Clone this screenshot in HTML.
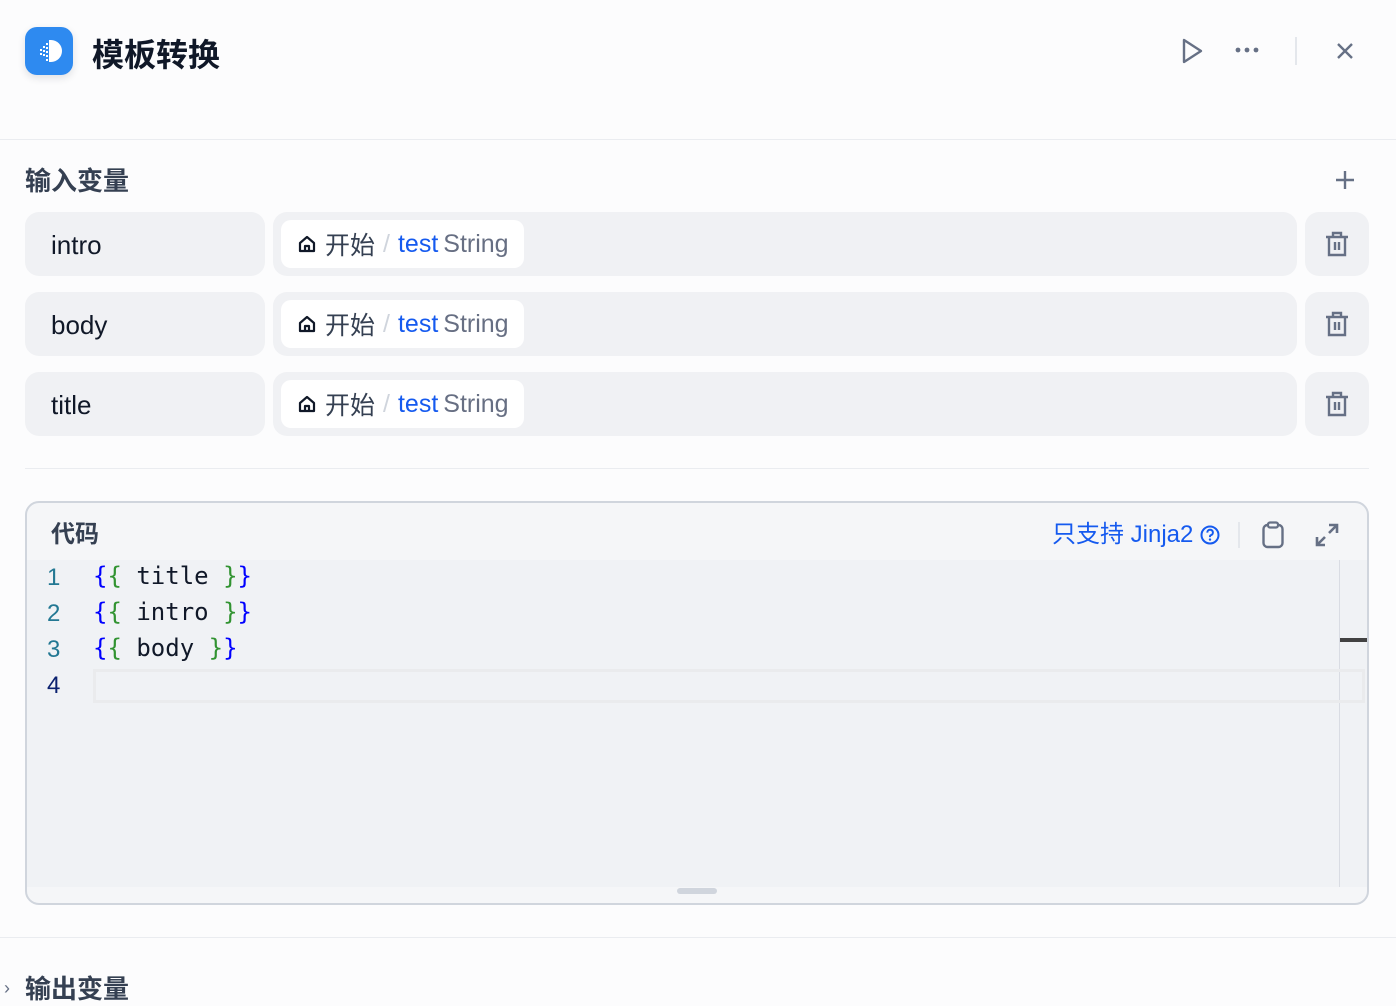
<!DOCTYPE html>
<html><head><meta charset="utf-8"><style>
*{box-sizing:border-box;margin:0;padding:0}
body{width:1396px;height:998px;overflow:hidden;background:#fcfcfd;font-family:"Liberation Sans","Noto Sans CJK SC",sans-serif;position:relative;color:#101828}
.a{position:absolute}
.name{position:absolute;left:25px;width:240px;height:64px;background:#f0f1f4;border-radius:14px;font-size:26px;color:#101828;padding-left:26px;line-height:66px}
.sel{position:absolute;left:273px;width:1024px;height:64px;background:#f0f1f4;border-radius:14px}
.pill{position:absolute;left:8px;top:8px;height:48px;width:243px;background:#fff;border-radius:10px;display:flex;align-items:center;padding-left:16px;font-size:25px;white-space:nowrap}
.del{position:absolute;left:1305px;width:64px;height:64px;background:#f0f1f4;border-radius:14px}
.del svg{position:absolute;left:19px;top:19px}
.code{font-family:"DejaVu Sans Mono","Liberation Mono",monospace;font-size:24px;position:absolute;left:93px}
.ln{font-family:"Liberation Sans",sans-serif;font-size:24px;position:absolute;left:47px;color:#237893}
.b{color:#0000ff}.g{color:#319331}
</style></head><body>
<div class="a" style="left:25px;top:27px;width:48px;height:48px;border-radius:12px;background:#2e8af0;box-shadow:0 3px 8px rgba(16,24,40,.12)">
<svg width="48" height="48" viewBox="0 0 48 48"><path d="M24 13h2a11 11 0 0 1 0 22h-2z" fill="#fff"/>
<g fill="#fff"><rect x="21" y="16" width="2" height="2"/><rect x="21" y="20" width="2" height="2"/><rect x="21" y="24" width="2" height="2"/><rect x="21" y="28" width="2" height="2"/><rect x="21" y="32" width="2" height="2"/><rect x="18" y="19" width="2" height="2"/><rect x="18" y="23" width="2" height="2"/><rect x="18" y="27" width="2" height="2"/><rect x="15" y="22" width="2" height="2"/><rect x="15" y="26" width="2" height="2"/></g></svg></div>
<div class="a" style="left:92px;top:30px;font-size:32px;font-weight:bold;color:#101828">模板转换</div>
<svg class="a" style="left:1180px;top:38px" width="24" height="26" viewBox="0 0 24 26"><path d="M4 2v22L21 13z" fill="none" stroke="#667085" stroke-width="2.4" stroke-linejoin="round"/></svg>
<svg class="a" style="left:1234px;top:46px" width="28" height="8"><circle cx="4" cy="4" r="2.4" fill="#667085"/><circle cx="13" cy="4" r="2.4" fill="#667085"/><circle cx="22" cy="4" r="2.4" fill="#667085"/></svg>
<div class="a" style="left:1295px;top:37px;width:2px;height:28px;background:#e4e7ec"></div>
<svg class="a" style="left:1335px;top:41px" width="20" height="20"><path d="M3 3l14 14M17 3L3 17" stroke="#667085" stroke-width="2.4"/></svg>
<div class="a" style="left:0;top:139px;width:1396px;height:1px;background:#eaecf0"></div>
<div class="a" style="left:25px;top:164px;font-size:26px;font-weight:bold;color:#354052;line-height:34px">输入变量</div>
<svg class="a" style="left:1334px;top:169px" width="22" height="22"><path d="M11 2v18M2 11h18" stroke="#667085" stroke-width="2.4"/></svg>

<div class="name" style="top:212px">intro</div>
<div class="name" style="top:292px">body</div>
<div class="name" style="top:372px">title</div>
<div class="sel" style="top:212px"><div class="pill"><svg width="20" height="20" viewBox="0 0 20 20" style="margin-right:8px"><path d="M3 9l7-6 7 6v8H3z M8 17v-5h4v5" fill="none" stroke="#101828" stroke-width="2.2" stroke-linejoin="round"/></svg><span style="color:#354052">开始</span><span style="color:#d0d5dd;margin:0 8px">/</span><span style="color:#155aef">test</span><span style="color:#676f83;margin-left:5px">String</span></div></div>
<div class="sel" style="top:292px"><div class="pill"><svg width="20" height="20" viewBox="0 0 20 20" style="margin-right:8px"><path d="M3 9l7-6 7 6v8H3z M8 17v-5h4v5" fill="none" stroke="#101828" stroke-width="2.2" stroke-linejoin="round"/></svg><span style="color:#354052">开始</span><span style="color:#d0d5dd;margin:0 8px">/</span><span style="color:#155aef">test</span><span style="color:#676f83;margin-left:5px">String</span></div></div>
<div class="sel" style="top:372px"><div class="pill"><svg width="20" height="20" viewBox="0 0 20 20" style="margin-right:8px"><path d="M3 9l7-6 7 6v8H3z M8 17v-5h4v5" fill="none" stroke="#101828" stroke-width="2.2" stroke-linejoin="round"/></svg><span style="color:#354052">开始</span><span style="color:#d0d5dd;margin:0 8px">/</span><span style="color:#155aef">test</span><span style="color:#676f83;margin-left:5px">String</span></div></div>
<div class="del" style="top:212px"><svg width="26" height="26" viewBox="0 0 26 26"><path d="M2 6h22M9 6V2h8v4M5 6v18h16V6M11 11v8M15 11v8" fill="none" stroke="#667085" stroke-width="2.4"/></svg></div>
<div class="del" style="top:292px"><svg width="26" height="26" viewBox="0 0 26 26"><path d="M2 6h22M9 6V2h8v4M5 6v18h16V6M11 11v8M15 11v8" fill="none" stroke="#667085" stroke-width="2.4"/></svg></div>
<div class="del" style="top:372px"><svg width="26" height="26" viewBox="0 0 26 26"><path d="M2 6h22M9 6V2h8v4M5 6v18h16V6M11 11v8M15 11v8" fill="none" stroke="#667085" stroke-width="2.4"/></svg></div>

<div class="a" style="left:25px;top:468px;width:1344px;height:1px;background:#eaecf0"></div>

<div class="a" style="left:25px;top:501px;width:1344px;height:404px;border:2px solid #d0d5dd;border-radius:14px;background:#f5f6f8;overflow:hidden">
 <div class="a" style="left:0;top:57px;width:1340px;height:327px;background:#f0f2f5"></div>
 <div class="a" style="left:1312px;top:57px;width:1px;height:327px;background:#d9dce3"></div>
 <div class="a" style="left:1313px;top:135px;width:28px;height:4px;background:#424242"></div>
 <div class="a" style="left:66px;top:166px;width:1272px;height:34px;border:3px solid #eaebed"></div>
 <div class="a" style="left:650px;top:385px;width:40px;height:6px;border-radius:3px;background:#d0d5dd"></div>
</div>
<div class="a" style="left:51px;top:519px;font-size:24px;font-weight:bold;color:#354052;line-height:32px">代码</div>
<div class="a" style="left:1052px;top:519px;font-size:24px;color:#155aef;display:flex;align-items:center;line-height:32px">只支持 Jinja2<svg width="22" height="22" viewBox="0 0 22 22" style="margin-left:6px"><circle cx="11" cy="11" r="8.5" fill="none" stroke="#155aef" stroke-width="2"/><path d="M8.3 8.6a2.8 2.8 0 1 1 3.6 2.6c-.6.2-.9.7-.9 1.3v.6" fill="none" stroke="#155aef" stroke-width="2"/><circle cx="11" cy="15.6" r="1.2" fill="#155aef"/></svg></div>
<div class="a" style="left:1238px;top:522px;width:2px;height:26px;background:#e4e7ec"></div>
<svg class="a" style="left:1261px;top:521px" width="24" height="28" viewBox="0 0 24 28"><rect x="2.5" y="4" width="19" height="22" rx="4" fill="none" stroke="#667085" stroke-width="2.4"/><rect x="7" y="1.5" width="10" height="5" rx="2" fill="#f5f6f8" stroke="#667085" stroke-width="2.2"/></svg>
<svg class="a" style="left:1313px;top:521px" width="28" height="28" viewBox="0 0 28 28"><path d="M16 4h8v8M24 4l-8 8M12 24H4v-8M4 24l8-8" fill="none" stroke="#667085" stroke-width="2.6"/></svg>

<div class="ln" style="top:564px">1</div><div class="ln" style="top:600px">2</div><div class="ln" style="top:636px">3</div><div class="ln" style="top:672px;color:#0b216f">4</div>
<div class="code" style="top:562px"><span class="b">{</span><span class="g">{</span> title <span class="g">}</span><span class="b">}</span></div>
<div class="code" style="top:598px"><span class="b">{</span><span class="g">{</span> intro <span class="g">}</span><span class="b">}</span></div>
<div class="code" style="top:634px"><span class="b">{</span><span class="g">{</span> body <span class="g">}</span><span class="b">}</span></div>

<div class="a" style="left:0;top:937px;width:1396px;height:1px;background:#eaecf0"></div>
<div class="a" style="left:4px;top:978px;font-size:18px;color:#667085">›</div>
<div class="a" style="left:25px;top:972px;font-size:26px;font-weight:bold;color:#354052;line-height:34px">输出变量</div>
</body></html>
